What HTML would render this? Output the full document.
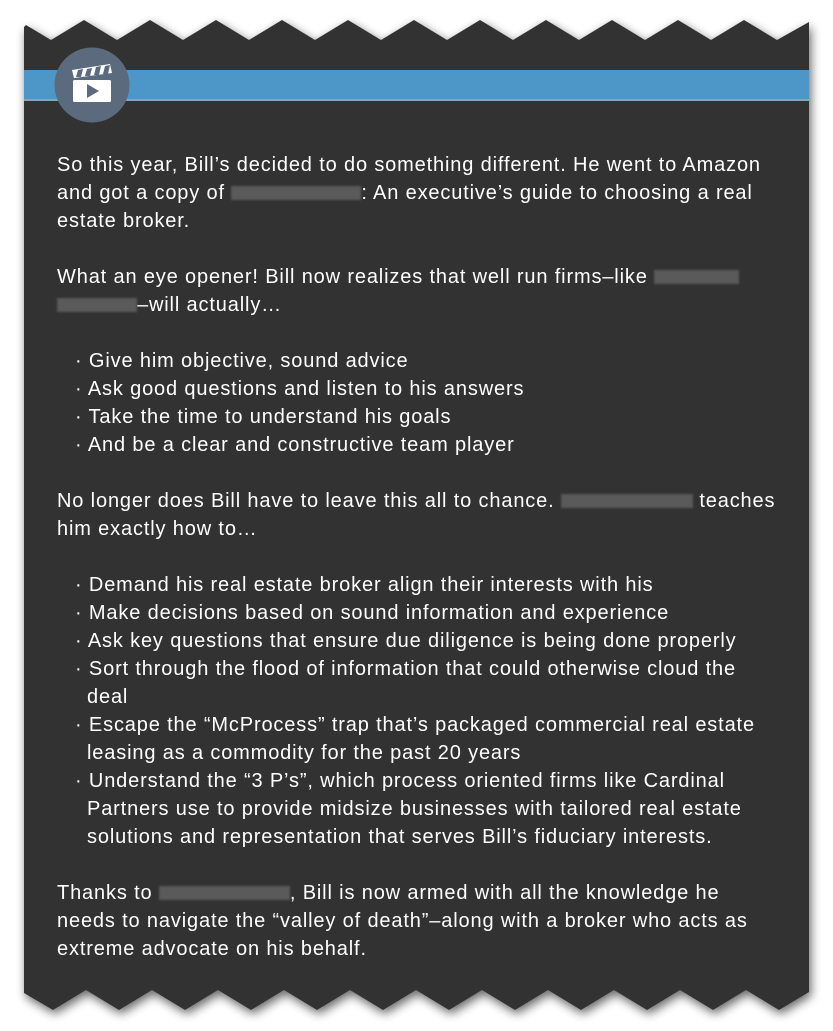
<!DOCTYPE html>
<html><head><meta charset="utf-8"><style>
html,body{margin:0;padding:0;background:#fff;width:833px;height:1031px;overflow:hidden}
body{position:relative;font-family:"Liberation Sans",sans-serif;color:#fff}
.l{position:absolute;left:57px;font-size:20px;letter-spacing:0.85px;line-height:28px;white-space:nowrap;margin-top:-3px}
.b{display:inline-block;width:130px;height:14px;background:#5a5a5a;vertical-align:-1px;filter:blur(1px)}
</style></head><body>
<svg width="833" height="1031" style="position:absolute;left:0;top:0">
<defs><filter id="s" x="-10%" y="-10%" width="120%" height="120%"><feGaussianBlur in="SourceAlpha" stdDeviation="5"/><feOffset dx="2" dy="4"/><feComponentTransfer><feFuncA type="linear" slope="0.6"/></feComponentTransfer><feMerge><feMergeNode/><feMergeNode in="SourceGraphic"/></feMerge></filter></defs>
<polygon filter="url(#s)" fill="#333" points="24,27 26,25 51,40 84,20 117,40 150,20 183,40 216,20 249,40 282,20 315,40 348,20 381,40 414,20 447,40 480,20 513,40 546,20 579,40 612,20 645,40 678,20 711,40 744,20 777,40 809,22 809,992 779,1010 746,990 713,1010 680,990 647,1010 614,990 581,1010 548,990 515,1010 482,990 449,1010 416,990 383,1010 350,990 317,1010 284,990 251,1010 218,990 185,1010 152,990 119,1010 86,990 53,1010 24,993"/>
<rect x="24" y="70" width="785" height="31" fill="#4d97c8"/>
<rect x="24" y="99" width="785" height="2" fill="#8fa3b5"/>
<circle cx="92" cy="85" r="37.5" fill="#5b6b7d"/>
<polygon points="72,70 110,64 112,73 74,78" fill="#fff"/>
<g fill="#5b6b7d"><polygon points="78,70 83,69 81,77 76,77"/><polygon points="87,69 92,68 90,76 85,76"/><polygon points="96,67 101,66 99,75 94,75"/><polygon points="105,66 110,65 108,74 103,74"/></g>
<rect x="73" y="80" width="38" height="22" rx="1.5" fill="#fff"/>
<polygon points="87,84 87,98 99,91" fill="#5b6b7d"/>
</svg>
<div class="l" style="top:154px">So this year, Bill’s decided to do something different. He went to Amazon</div>
<div class="l" style="top:182px">and got a copy of <span class="b"></span>: An executive’s guide to choosing a real</div>
<div class="l" style="top:210px">estate broker.</div>
<div class="l" style="top:266px">What an eye opener! Bill now realizes that well run firms–like <span class="b" style="width:85px"></span></div>
<div class="l" style="top:294px"><span class="b" style="width:80px"></span>–will actually…</div>
<div class="l" style="top:350px;left:75px">· Give him objective, sound advice</div>
<div class="l" style="top:378px;left:75px">· Ask good questions and listen to his answers</div>
<div class="l" style="top:406px;left:75px">· Take the time to understand his goals</div>
<div class="l" style="top:434px;left:75px">· And be a clear and constructive team player</div>
<div class="l" style="top:490px">No longer does Bill have to leave this all to chance. <span class="b" style="width:132px"></span> teaches</div>
<div class="l" style="top:518px">him exactly how to…</div>
<div class="l" style="top:574px;left:75px">· Demand his real estate broker align their interests with his</div>
<div class="l" style="top:602px;left:75px">· Make decisions based on sound information and experience</div>
<div class="l" style="top:630px;left:75px">· Ask key questions that ensure due diligence is being done properly</div>
<div class="l" style="top:658px;left:75px">· Sort through the flood of information that could otherwise cloud the</div>
<div class="l" style="top:686px;left:87px">deal</div>
<div class="l" style="top:714px;left:75px">· Escape the “McProcess” trap that’s packaged commercial real estate</div>
<div class="l" style="top:742px;left:87px">leasing as a commodity for the past 20 years</div>
<div class="l" style="top:770px;left:75px">· Understand the “3 P’s”, which process oriented firms like Cardinal</div>
<div class="l" style="top:798px;left:87px">Partners use to provide midsize businesses with tailored real estate</div>
<div class="l" style="top:826px;left:87px">solutions and representation that serves Bill’s fiduciary interests.</div>
<div class="l" style="top:882px">Thanks to <span class="b" style="width:131px"></span>, Bill is now armed with all the knowledge he</div>
<div class="l" style="top:910px">needs to navigate the “valley of death”–along with a broker who acts as</div>
<div class="l" style="top:938px">extreme advocate on his behalf.</div>
</body></html>
